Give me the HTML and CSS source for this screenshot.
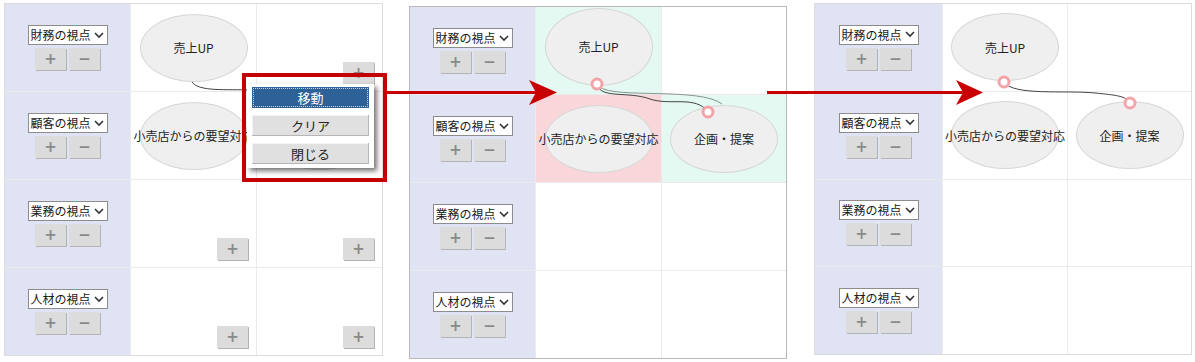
FILE: index.html
```html
<!DOCTYPE html>
<html lang="ja">
<head>
  <meta charset="utf-8">
  <title>戦略マップ - 移動</title>
  <link rel="stylesheet" href="styles.css">
</head>
<body>
  <div class="page">
    <!-- Step 1: context menu on a node -->
    <section class="board board-a">
      <div class="cell side">
        <div class="picker"><span>財務の視点</span><svg width="10" height="7" viewBox="0 0 10 7"><polyline points="1,1 5,5 9,1"/></svg></div>
        <div class="pm"><button class="btn">+</button><button class="btn">−</button></div>
      </div>
      <div class="cell"><div class="node"><span>売上UP</span></div></div>
      <div class="cell corner"><button class="btn">+</button></div>

      <div class="cell side">
        <div class="picker"><span>顧客の視点</span><svg width="10" height="7" viewBox="0 0 10 7"><polyline points="1,1 5,5 9,1"/></svg></div>
        <div class="pm"><button class="btn">+</button><button class="btn">−</button></div>
      </div>
      <div class="cell"><div class="node"><span>小売店からの要望対応</span></div></div>
      <!-- node hidden under the popup menu -->
      <div class="cell"><div class="node"></div></div>

      <div class="cell side">
        <div class="picker"><span>業務の視点</span><svg width="10" height="7" viewBox="0 0 10 7"><polyline points="1,1 5,5 9,1"/></svg></div>
        <div class="pm"><button class="btn">+</button><button class="btn">−</button></div>
      </div>
      <div class="cell corner"><button class="btn">+</button></div>
      <div class="cell corner"><button class="btn">+</button></div>

      <div class="cell side">
        <div class="picker"><span>人材の視点</span><svg width="10" height="7" viewBox="0 0 10 7"><polyline points="1,1 5,5 9,1"/></svg></div>
        <div class="pm"><button class="btn">+</button><button class="btn">−</button></div>
      </div>
      <div class="cell corner"><button class="btn">+</button></div>
      <div class="cell corner"><button class="btn">+</button></div>

      <!-- link between nodes -->
      <svg class="links" width="377" height="351">
        <path d="M187,78 C194,88 222,85 245,86 C280,88 300,90 312,97"/>
      </svg>

      <!-- popup menu -->
      <div class="menu">
        <button class="menu-btn active">移動</button>
        <button class="menu-btn">クリア</button>
        <button class="menu-btn">閉じる</button>
      </div>
      <div class="callout"></div>
    </section>

    <!-- Step 2: moving, target cells highlighted -->
    <section class="board board-b">
      <div class="cell side">
        <div class="picker"><span>財務の視点</span><svg width="10" height="7" viewBox="0 0 10 7"><polyline points="1,1 5,5 9,1"/></svg></div>
        <div class="pm"><button class="btn">+</button><button class="btn">−</button></div>
      </div>
      <div class="cell ok"><div class="node node-tall"><span>売上UP</span></div></div>
      <div class="cell"></div>

      <div class="cell side">
        <div class="picker"><span>顧客の視点</span><svg width="10" height="7" viewBox="0 0 10 7"><polyline points="1,1 5,5 9,1"/></svg></div>
        <div class="pm"><button class="btn">+</button><button class="btn">−</button></div>
      </div>
      <div class="cell ng"><div class="node"><span>小売店からの要望対応</span></div></div>
      <div class="cell ok"><div class="node"><span>企画・提案</span></div></div>

      <div class="cell side">
        <div class="picker"><span>業務の視点</span><svg width="10" height="7" viewBox="0 0 10 7"><polyline points="1,1 5,5 9,1"/></svg></div>
        <div class="pm"><button class="btn">+</button><button class="btn">−</button></div>
      </div>
      <div class="cell"></div>
      <div class="cell"></div>

      <div class="cell side">
        <div class="picker"><span>人材の視点</span><svg width="10" height="7" viewBox="0 0 10 7"><polyline points="1,1 5,5 9,1"/></svg></div>
        <div class="pm"><button class="btn">+</button><button class="btn">−</button></div>
      </div>
      <div class="cell"></div>
      <div class="cell"></div>

      <svg class="links" width="377" height="351">
        <path class="faint" d="M190,80 C205,92 290,80 312,97"/>
        <path d="M187,78 C192,92 218,84 240,92 C260,99 286,88 298,105"/>
        <circle class="handle" cx="187" cy="77" r="5"/>
        <circle class="handle" cx="298" cy="105" r="5"/>
      </svg>
    </section>

    <!-- Step 3: result -->
    <section class="board board-c">
      <div class="cell side">
        <div class="picker"><span>財務の視点</span><svg width="10" height="7" viewBox="0 0 10 7"><polyline points="1,1 5,5 9,1"/></svg></div>
        <div class="pm"><button class="btn">+</button><button class="btn">−</button></div>
      </div>
      <div class="cell"><div class="node"><span>売上UP</span></div></div>
      <div class="cell"></div>

      <div class="cell side">
        <div class="picker"><span>顧客の視点</span><svg width="10" height="7" viewBox="0 0 10 7"><polyline points="1,1 5,5 9,1"/></svg></div>
        <div class="pm"><button class="btn">+</button><button class="btn">−</button></div>
      </div>
      <div class="cell"><div class="node"><span>小売店からの要望対応</span></div></div>
      <div class="cell"><div class="node"><span>企画・提案</span></div></div>

      <div class="cell side">
        <div class="picker"><span>業務の視点</span><svg width="10" height="7" viewBox="0 0 10 7"><polyline points="1,1 5,5 9,1"/></svg></div>
        <div class="pm"><button class="btn">+</button><button class="btn">−</button></div>
      </div>
      <div class="cell"></div>
      <div class="cell"></div>

      <div class="cell side">
        <div class="picker"><span>人材の視点</span><svg width="10" height="7" viewBox="0 0 10 7"><polyline points="1,1 5,5 9,1"/></svg></div>
        <div class="pm"><button class="btn">+</button><button class="btn">−</button></div>
      </div>
      <div class="cell"></div>
      <div class="cell"></div>

      <svg class="links" width="377" height="351">
        <path d="M189,78 C198,92 250,86 280,89 C300,91 312,92 315,99"/>
        <circle class="handle" cx="189" cy="78" r="5"/>
        <circle class="handle" cx="315" cy="99" r="5"/>
      </svg>
    </section>

    <!-- step arrows -->
    <svg class="arrow arrow-1" width="172" height="26" viewBox="0 0 172 26">
      <rect x="0" y="11" width="152" height="3"/>
      <polygon points="143,0 171,12.5 143,25 150,12.5"/>
    </svg>
    <svg class="arrow arrow-2" width="217" height="26" viewBox="0 0 217 26">
      <rect x="0" y="11" width="198" height="3"/>
      <polygon points="189,0 216,12.5 189,25 196,12.5"/>
    </svg>
  </div>
</body>
</html>
```

FILE: styles.css
```css
body {
  margin: 0;
  background: #fff;
  font-family: "Noto Sans CJK JP", "Noto Sans", sans-serif;
  color: #222;
}
.page {
  position: relative;
  display: flex;
  align-items: flex-start;
  gap: 26px;
  padding: 3px 0 0 4px;
}
.board {
  position: relative;
  width: 379px;
  height: 353px;
  box-sizing: border-box;
  border: 1px solid #dcdcdc;
  background: #ebebeb; /* grid lines come from the gap */
  display: grid;
  grid-template-columns: 125px 125px 1fr;
  grid-template-rows: repeat(4, 1fr);
  gap: 1px;
}
.board-b {
  margin-top: 3px;
  width: 378px;
  border-color: #b8b8b8;
}
.board-c {
  margin-left: 1px;
  width: 378px;
  height: 352px;
  grid-template-columns: 127px 124px 1fr;
}
.cell {
  background: #fff;
  display: flex;
  align-items: center;
  justify-content: center;
  min-width: 0;
}
.cell.side {
  background: #e0e3f3;
  flex-direction: column;
  gap: 3px;
}
.cell.ok {
  background: #e3f9f2;
}
.cell.ng {
  background: #f8d6da;
}
.cell.corner {
  align-items: flex-end;
  justify-content: flex-end;
  padding: 0 8px 7px 0;
}

/* perspective selector */
.picker {
  width: 80px;
  height: 20px;
  box-sizing: border-box;
  border: 1px solid #8c8c8c;
  background: #fff;
  display: flex;
  align-items: center;
  justify-content: space-between;
  padding: 0 3px 0 2px;
  font-size: 12px;
  line-height: 1;
  color: #1a1a1a;
}
.picker svg polyline {
  fill: none;
  stroke: #333;
  stroke-width: 1.6;
}
.pm {
  display: flex;
  gap: 3px;
}
.btn {
  width: 31px;
  height: 22px;
  padding: 0;
  border: none;
  background: #dcdcdc;
  box-shadow: 1px 1px 0 #b3b3b3;
  color: #8a8a8a;
  font-family: "DejaVu Sans", sans-serif;
  font-size: 15px;
  font-weight: bold;
  line-height: 22px;
}

/* strategy node */
.node {
  width: 108px;
  height: 68px;
  box-sizing: border-box;
  border: 1px solid #d6d6d6;
  border-radius: 50%;
  background: #efefef;
  display: flex;
  align-items: center;
  justify-content: center;
  font-size: 12px;
  white-space: nowrap;
}
.node-tall {
  height: 78px;
  margin-bottom: 8px;
}

.links {
  position: absolute;
  left: 0;
  top: 0;
  pointer-events: none;
  overflow: visible;
}
.links path {
  fill: none;
  stroke: #444;
  stroke-width: 1;
}
.links path.faint {
  stroke: #8a9490;
}
.links .handle {
  fill: #fff;
  stroke: #f4a3a9;
  stroke-width: 3;
}

/* popup menu */
.menu {
  position: absolute;
  left: 242px;
  top: 80px;
  width: 127px;
  box-sizing: border-box;
  padding: 3px 5px 4px;
  background: #fff;
  box-shadow: 3px 3px 5px rgba(0, 0, 0, 0.55);
  display: flex;
  flex-direction: column;
  gap: 7px;
  z-index: 2;
}
.menu-btn {
  height: 21px;
  padding: 0;
  border: none;
  background: #e0e0e0;
  box-shadow: inset -1px -1px 0 #b5b5b5, inset 1px 1px 0 #f4f4f4;
  font-family: "Noto Sans CJK JP", sans-serif;
  font-size: 13px;
  color: #222;
}
.menu-btn.active {
  background: #2f6199;
  color: #fff;
  box-shadow: none;
  outline: 1px dotted #c9d3e0;
  outline-offset: -2px;
}
.callout {
  position: absolute;
  left: 237px;
  top: 69px;
  width: 145px;
  height: 109px;
  box-sizing: border-box;
  border: 4px solid #c40000;
  z-index: 3;
}

/* red arrows between steps */
.arrow {
  position: absolute;
  top: 80px;
  fill: #c80000;
}
.arrow-1 {
  left: 386px;
}
.arrow-2 {
  left: 767px;
}
```
